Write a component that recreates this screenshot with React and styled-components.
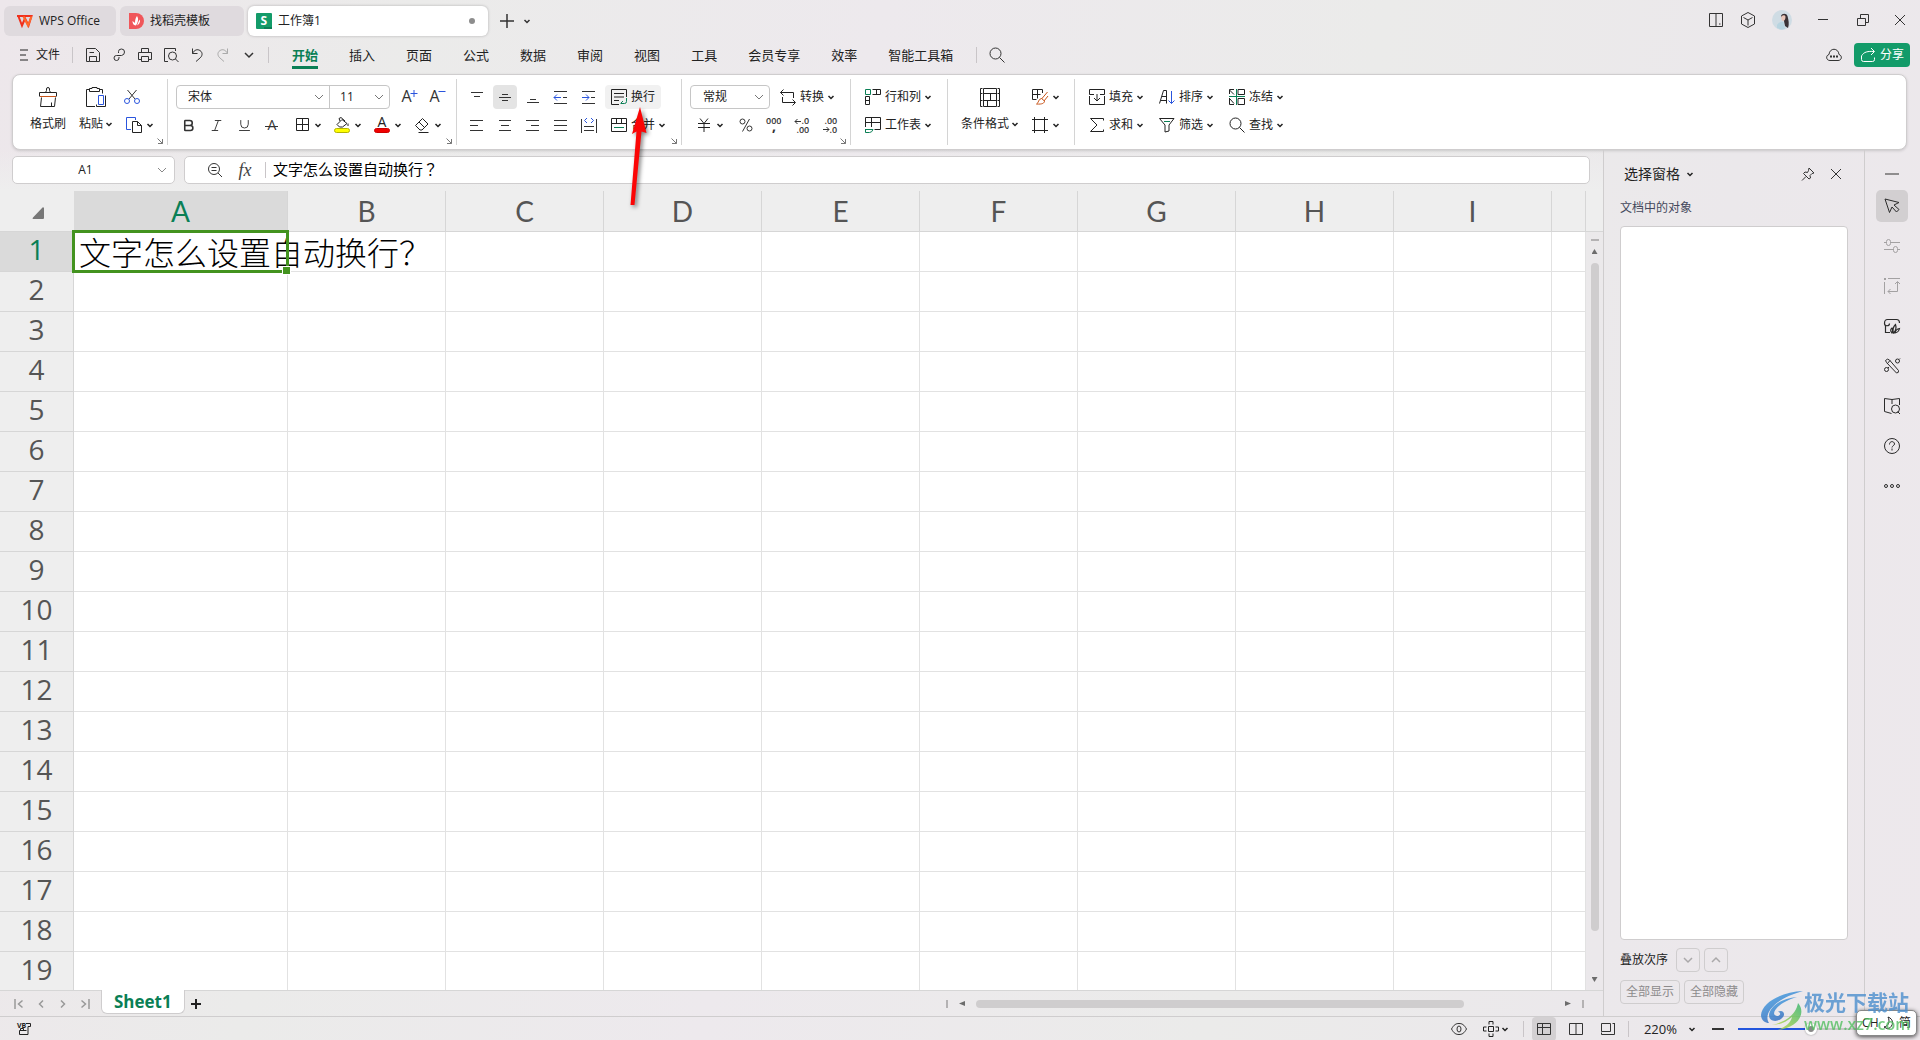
import React, { useState } from "react";
import styled, { createGlobalStyle } from "styled-components";
import { Bold, Italic, Underline } from "lucide-react";

const GlobalStyle = createGlobalStyle`
  * {
    box-sizing: border-box;
  }
  body {
    margin: 0;
    overflow: hidden;
    font-family: "Open Sans", "Noto Sans CJK SC", sans-serif;
    font-size: 12px;
    line-height: 16px;
    color: #222;
  }
  button, input, select {
    font: inherit;
    color: inherit;
    margin: 0;
    padding: 0;
    border: 0;
    background: none;
    outline: none;
  }
`;

const GREEN = "#0a7f55";
const BLUE = "#2a55dd";
const LINE = "#cfcdce";

/* ---------- icons ---------- */

const Svg = styled.svg`
  display: block;
  flex: none;
  fill: none;
  stroke: currentColor;
  overflow: visible;

  text {
    fill: currentColor;
    stroke: none;
    font-family: "Open Sans", sans-serif;
  }
`;

const ICONS = {
  // 20px
  painter: [20, <>
    <path d="M7.5 5.5L8.5 3.5V2a1.5 1.5 0 0 1 3 0v1.5l1 2M1.5 9.5v-4h17v4M3.5 10.5l-1 9h14l1-9M13.5 19.5v-4" />
    <path stroke="#c8551b" d="M2 9.5h16" />
  </>],
  paste: [20, <>
    <path d="M9 19.5H.5v-17h3M13.5 2.5h3v4M3.5 1.5v3h10v-3M6 1.5V.5h5v1M3.5 1.5H6M11 1.5h2.5M19.5 8.5v11h-9v-2" />
    <path stroke={BLUE} d="M12.5 8.5h5v9h-5z" />
  </>],
  cut: [20, <>
    <path d="M5.5 3l7.5 9M14.5 3L7 12" />
    <g stroke={BLUE}><circle cx="5" cy="14" r="2.5" /><circle cx="15" cy="14" r="2.5" /></g>
  </>],
  copy: [20, <>
    <path stroke={BLUE} d="M7 14.5H2.5v-12h9V5" />
    <path d="M8.5 6.5h5l4 4v7h-9zM13.5 6.5v4h4" />
  </>],
  border: [20, <path d="M4.5 3.5h12v12h-12zM10.5 3.5v12M4.5 9.5h12" />],
  bucket: [20, <>
    <path d="M5 9.5L10 4.5l5 4-4.5 3.5H7.5zM8 6l-1-2.5 2-1 4 3.5M16 8.5v2.5" />
    <rect x="2.5" y="13.5" width="15" height="4" rx="2" fill="#ff0" stroke="#b5b500" />
  </>],
  fontColor: [20, <>
    <text x="5.5" y="12" fontSize="14">A</text>
    <rect x="2.5" y="13.5" width="15" height="4" rx="2" fill="#f00000" stroke="#c00" />
  </>],
  eraser: [20, <path d="M3.5 10.5l7-7 5.5 5.5-6 6H8zM7 7l5.5 5.5M6.5 17.5h10" />],
  grow: [20, <>
    <text x="1.5" y="15" fontSize="16">A</text>
    <path stroke={BLUE} d="M10.5 6.5h7M14 3v7" />
  </>],
  shrink: [20, <>
    <text x="1.5" y="15" fontSize="16">A</text>
    <path stroke={BLUE} d="M10.5 4.5h7" />
  </>],
  strike: [20, <>
    <text x="5.5" y="15" fontSize="14">A</text>
    <path d="M3 11.5h13" />
  </>],
  alignTop: [20, <path d="M4 5.5h12M7 9.5h6" />],
  alignMiddle: [20, <path d="M7 7.5h6M4 10.5h12M7 13.5h6" />],
  alignBottom: [20, <path d="M7 12.5h6M4 15.5h12" />],
  outdent: [20, <>
    <path d="M3 4.5h13M12 10.5h4M3 16.5h13" />
    <path stroke={BLUE} d="M3 10.5h7M6 7.5l-3 3 3 3" />
  </>],
  indent: [20, <>
    <path d="M3 4.5h13M12 10.5h4M3 16.5h13" />
    <path stroke={BLUE} d="M3 10.5h7M7 7.5l3 3-3 3" />
  </>],
  alignLeft: [20, <path d="M3 5.5h13M3 10.5h8M3 15.5h13" />],
  alignCenter: [20, <path d="M4 5.5h12M6 10.5h8M4 15.5h12" />],
  alignRight: [20, <path d="M3 5.5h13M8 10.5h8M3 15.5h13" />],
  justify: [20, <path d="M3 5.5h13M3 10.5h13M3 15.5h13" />],
  distribute: [20, <>
    <path d="M2.5 4v14M17.5 4v14M5 11.5h10M5 15.5h10" />
    <path stroke={BLUE} d="M8 3L5.5 5.5 8 8M12 3l2.5 2.5L12 8" />
  </>],
  yuan: [20, <path d="M6 3.5l4 5 4-5M4 8.5h12M4 12.5h12M10 8.5v8.5" />],
  percent: [20, <><circle cx="6.5" cy="6.5" r="2.5" /><circle cx="13.5" cy="13.5" r="2.5" /><path d="M13.5 4l-7 12.5" /></>],
  thousands: [20, <>
    <text x="2" y="9" fontSize="9" fontWeight="600">000</text>
    <text x="8" y="16" fontSize="14" fontWeight="700">,</text>
  </>],
  lessDecimal: [20, <>
    <path d="M3 6.5h6M5.5 4L3 6.5 5.5 9" />
    <text x="9.5" y="9" fontSize="9" fontWeight="600">.0</text>
    <text x="4.5" y="17.5" fontSize="9" fontWeight="600">.00</text>
  </>],
  moreDecimal: [20, <>
    <text x="4.5" y="9" fontSize="9" fontWeight="600">.00</text>
    <path d="M3 14.5h6M6.5 12L9 14.5 6.5 17" />
    <text x="9.5" y="17.5" fontSize="9" fontWeight="600">.0</text>
  </>],
  condition: [20, <>
    <path d="M3.5 1.5h13v18h-13zM3.5 6.5h13M3.5 13.5h13M10.5 7v6M7.5 13.5v6" />
    <path d="M2.5 1.5h-2v18h2M17.5 1.5h2v18h-2M.5 6.5h2M.5 13.5h2M17.5 6.5h2M17.5 13.5h2" />
  </>],
  cellStyle: [20, <>
    <path d="M11 2.5H2.5v10h4M2.5 7.5h8M12.5 6V2.5H8M7.5 2.5v9" />
    <path stroke="#c8551b" d="M17.5 5l-6 7M18 9l-4 5M11.500 11.5l3 2.5c0 2-2 3.5-8 3 2.500-1 1.5-5 5-5.5z" />
  </>],
  crop: [20, <path d="M4.5 2v16M14.5 2v16M2 4.5h16M2 15.5h16" />],
  cursor: [20, <path d="M3 3l4.500 13.500 2.500-5.500 4.500 5 2.500-2.500-5-4.500 5-2.500z" />],
  sliders: [20, <><path d="M2 6.500h2.500M9 6.500h9M2 13.500h9M15.500 13.500H18" /><rect x="4.500" y="3.500" width="4" height="6" rx="2" /><rect x="11.500" y="10.500" width="4" height="6" rx="2" /></>],
  resize: [20, <><path d="M6 2.500h12M2.500 6v12M15.500 6v9.500H6M13 8l2.500-2.500L18 8M8.500 13L6 15.500 8.500 18" /><path fill="currentColor" stroke="none" d="M2 2h2v2H2z" /></>],
  shop: [20, <>
    <path strokeWidth="1.2" d="M2.500 7.500C2.500 4 4 3.500 5.500 3.500h9c1.500 0 3 1 3 3.500M2.500 7.500c0 3 5 3 5 0M3.500 10v6.500H8" />
    <path strokeWidth="1.2" d="M10 17c-2-2-1.500-4 0-5 1 1.500 1 3.500 0 5zM11.500 17c-1-3 0-6.500 2-8.500 1 3 .5 6-2 8.500zM13 17c.5-2.500 2-4 4.500-4.500-.5 2.500-2 4-4.500 4.500z" />
  </>],
  wand: [20, <><path d="M3.500 4.500q2-2.500 4-.5l9 10.500q.5 2.500-2 2.500L4.500 6.500zM5 8l3-3.500" /><circle cx="15.500" cy="5" r="2" /><circle cx="4.500" cy="13.500" r="2" /><path d="M17 3.500l1-1M6 12l1-1" /></>],
  book: [20, <><path d="M10 3.500L2.500 2.500v13l7 2M10 3.500l7.500-1V9M10 3.500V8" /><circle cx="13.500" cy="13" r="4" /><path d="M15.500 15.500l2.500 2.500" /></>],
  help: [20, <><circle cx="10" cy="10" r="7.500" /><path d="M7.500 8.500c0-4 5-3.500 5-.5 0 1.500-2.500 2-2.500 3.500M10 12.500v2" /></>],
  more: [20, <><circle cx="4" cy="10" r="1.500" /><circle cx="10" cy="10" r="1.500" /><circle cx="16" cy="10" r="1.500" /></>],
  // 16px
  wrap: [16, <>
    <path d="M8 15.500H.5V.5h15V8M3 4.500h10M3 8h10M3 11.500h5" />
    <path stroke={GREEN} d="M15.500 9v3.500q0 2-2 2H10M12 12l-2.500 2.500" />
  </>],
  merge: [16, <>
    <path d="M.5 1.500h15v13H.5zM.5 6.500h15M5.500 1.500v5M10.500 1.500v5" />
    <path stroke={GREEN} d="M3 10.500h10" />
  </>],
  convert: [16, <path d="M3.500.5l-3 3 3 3M.5 3.500h13V9M2.500 8v5.500H15M12.500 10.500l3 3-3 3" />],
  rowCol: [16, <>
    <path d="M7.500 .5h8v5h-8M11.500.5v5M.5 7.500v8h4v-8zM.5 11.500h4" />
    <path stroke={GREEN} d="M.5.5h5v5h-5z" />
  </>],
  sheet: [16, <>
    <path d="M.5 10V.5h15v12h-6M.5 5.500h15M6.500.5V10" />
    <path stroke={GREEN} d="M.5 12v3.500h4q2.500 0 3.500-3H.5" />
  </>],
  fill: [16, <path d="M5 5.500H.5V.5h15v5H11M.5 7v8.500h15V7M8 5v7M5 9l3 3 3-3" />],
  sum: [16, <path d="M14.500 3.500V1.500h-13l6.500 6.500-6.500 6.500h13v-2" />],
  sort: [16, <>
    <path d="M7.500 14.500v-13h-3l-4 13M3 7.500h4.500M2 11.500h5.500" />
    <path stroke={BLUE} d="M12.500 2v12.500M9.500 11.500l3 3 3-3" />
  </>],
  filter: [16, <>
    <path d="M.5 1.500h14.500l-5 6.500v6l-4 1V8z" />
    <path stroke={GREEN} d="M5 4.500h6" />
  </>],
  freeze: [16, <>
    <path d="M5 .5H.5V5M.5 1l4.500 4.500M9 .5h6.500v5H9zM.5 9v6.500H5M1 10l4 4.500M9 9.500h6.500v6H9z" />
    <path stroke={GREEN} d="M0 7.500h16M7.500 0v16" />
  </>],
  search: [16, <><circle cx="6.500" cy="6.500" r="5.500" /><path d="M10.500 10.500l5 5" /></>],
  menu: [16, <path d="M4 3h8M4 8h6M4 13h8" />],
  save: [16, <path d="M4.500 14.500h-3v-13h9l4 4v9zM4.500 14.500v-5h7v5M4.500 5.500H9" />],
  link: [16, <path d="M7.500 6V4.500q0-2.500 3-2.500t3 3-3 3.500H5.500a2.500 2.500 0 1 0 2.500 2.500V10" />],
  print: [16, <path d="M4.500 5.500v-4h7v4M4.500 12.500h-3v-7h13v7h-3M4.500 9.500h7v5h-7z" />],
  preview: [16, <><path d="M5 14.500H1.500v-13h11V4" /><circle cx="9.500" cy="9" r="4" /><path d="M12.500 12l3 3" /></>],
  undo: [16, <path d="M3.500 1.500v5h5M3.500 6.500c2-4 5-4.500 7.500-3 3 2 2.500 5.500 0 7.500l-4 3.500" />],
  redo: [16, <path d="M12.500 1.500v5h-5M12.500 6.500c-2-4-5-4.500-7.500-3-3 2-2.500 5.500 0 7.500l4 3.500" />],
  down: [16, <path strokeWidth="1.500" d="M4 6l4 4 4-4" />],
  up: [16, <path strokeWidth="1.500" d="M4 10l4-4 4 4" />],
  thinDown: [10, <path d="M1 3l4 4 4-4" />],
  caret: [6, <path strokeWidth="1.500" d="M.5 2L3 4.500 5.500 2" />],
  corner: [6, <path stroke="#777" d="M.5.5l5 5M5.500 1v4.500H1" />],
  plus: [16, <path strokeWidth="1.500" d="M1 8h14M8 1v14" />],
  split: [16, <path d="M8 14.500H1.500v-13h13V14.500H8zM8 1.500v13M11 12h1.500" />],
  cube: [16, <path d="M8 .5l6.500 3.500v8L8 15.500 1.500 12V4zM3.500 5.500L8 8l4.500-2.500M8 8v5.500" />],
  minimize: [12, <path d="M1 5.500h10" />],
  restore: [12, <path d="M.5 4.500h8v7h-8zM3.500 4.500v-4h8v8h-3" />],
  close: [12, <path d="M1 1l10 10M11 1L1 11" />],
  cloud: [16, <>
    <path d="M4 13.500c-4 0-4.500-5-1-6 .5-7 9.500-7 10 0 3.500 1 3 6-1 6z" />
    <path strokeWidth="2" strokeDasharray="2 1" d="M4 9.500h8" />
  </>],
  share: [16, <path d="M1.500 8.500v4q0 2 2 2h9q2 0 2-2v-2M2 8.500C3.500 5 8 4 14 4.500M11 1l3.500 3.500L11 8" />],
  pin: [14, <path d="M8 1l5 5-2 .5-2 2 .5 2.500-1.500 1L2.500 6.500 4 5l2.500.5 1-2zM5 9.500L1 13.500" />],
  zoomOut: [16, <><circle cx="7" cy="7" r="5.500" /><path d="M11 11l4 4M4.500 5.500h5M4.500 8.500h5" /></>],
  eye: [16, <><path d="M.5 8C3 3.500 5 2.500 8 2.500S13 3.500 15.500 8C13 12.500 11 13.500 8 13.500S3 12.500.5 8z" /><ellipse cx="8" cy="8" rx="2" ry="3" /></>],
  target: [16, <path d="M5.500 5.500h5v5h-5zM6 3.500v-3h4v3M6 12.500v3h4v-3M3.500 6h-3v4h3M12.500 6h3v4h-3" />],
  normalView: [16, <path d="M1.500 2.500h13v11h-13zM1.500 6.500h13M6.500 2.500v11" />],
  pageView: [16, <path d="M1.500 2.500h13v11h-13zM8 2.500v11" />],
  readView: [16, <path d="M1.500 2.500h9v8h-9zM14.500 2v11.500h-13v-2M12.500 2.500h2" />],
  macro: [16, <>
    <text x="1" y="7" fontSize="7" fontWeight="700">VB</text>
    <path d="M10 2.500h4.500v3h-2.500v8H3.500v-4h7M7.500 9.500v-2h-3v2" />
  </>],
  first: [12, <path strokeWidth="1.500" d="M2 1v10M9.500 2.500L5.500 6l4 3.500" />],
  prev: [12, <path strokeWidth="1.500" d="M8 2.500L4.500 6 8 9.500" />],
  next: [12, <path strokeWidth="1.500" d="M4 2.500L7.500 6 4 9.500" />],
  last: [12, <path strokeWidth="1.500" d="M10 1v10M2.500 2.500l4 3.500-4 3.500" />],
};

const Icon = ({ name }) => {
  const [size, body] = ICONS[name];
  return (
    <Svg width={size} height={size} viewBox={`0 0 ${size} ${size}`} aria-hidden="true">
      {body}
    </Svg>
  );
};

/* ---------- shell ---------- */

const Page = styled.div`
  height: 100vh;
  display: flex;
  flex-direction: column;
  background: linear-gradient(100deg, #ede7eb 0%, #ebebea 20%, #ede9ed 42%, #ebebea 66%, #ebe8eb 84%, #ede8ec 100%);
`;

const TitleBar = styled.header`
  display: flex;
  gap: 4px;
  height: 36px;
  padding: 6px 0 0 4px;
`;

const DocTab = styled.button`
  display: flex;
  align-items: center;
  gap: 6px;
  width: ${({ $width }) => $width}px;
  height: 30px;
  padding: 0 ${({ $pad }) => $pad || 8}px;
  border-radius: 6px;
  text-align: left;
  background: ${({ $active }) => ($active ? "#fff" : "#dfdade")};
  box-shadow: ${({ $active }) => ($active ? "0 0 3px rgba(0, 0, 0, 0.25)" : "none")};
`;

const Unsaved = styled.i`
  width: 6px;
  height: 6px;
  margin: 0 5px 0 auto;
  border-radius: 3px;
  background: #8d8d8d;
`;

const PlainButton = styled.button`
  display: flex;
  align-items: center;
  justify-content: center;
  width: ${({ $width }) => $width || 24}px;
  height: 24px;
  flex: none;
  border-radius: 4px;
  color: ${({ $color }) => $color || "#333"};
  background: ${({ $active }) => ($active ? "#e4e4e4" : "none")};
`;

const ViewButton = styled(PlainButton)`
  background: ${({ $active }) => ($active ? "#d3d0d2" : "none")};
`;

const NewTab = styled.div`
  display: flex;
  align-items: center;
  padding-left: 3px;
`;

const WindowControls = styled.div`
  display: flex;
  align-items: center;
  height: 28px;
  margin-left: auto;
`;

const MenuBar = styled.nav`
  display: flex;
  align-items: center;
  height: 38px;
  padding: 0 10px 0 12px;
`;

const FileButton = styled.button`
  display: flex;
  align-items: center;
  gap: 4px;
  padding: 0 12px 0 4px;
`;

const MenuDivider = styled.i`
  width: 1px;
  height: 16px;
  margin: ${({ $margin }) => $margin || "0"};
  background: #c9c5c8;
`;

const QuickTools = styled.div`
  display: flex;
  gap: 2px;
  padding: 0 7px 0 8px;
`;

const MenuTabs = styled.div`
  display: flex;
  gap: 31px;
  padding: 0 23px;
`;

const MenuTab = styled.button`
  height: 28px;
  font-size: 13px;
  line-height: 22px;
  padding-top: 3px;
  white-space: nowrap;
  border-bottom: 3px solid ${({ $active }) => ($active ? GREEN : "transparent")};
  font-weight: ${({ $active }) => ($active ? 700 : 400)};
  color: ${({ $active }) => ($active ? GREEN : "#222")};
`;

const MenuRight = styled.div`
  display: flex;
  align-items: center;
  gap: 8px;
  margin-left: auto;
`;

const ShareButton = styled.button`
  display: flex;
  align-items: center;
  gap: 4px;
  height: 24px;
  padding: 0 6px;
  border-radius: 4px;
  background: #139b69;
  color: #fff;
`;

/* ---------- ribbon ---------- */

const Ribbon = styled.section`
  display: flex;
  height: 76px;
  margin: 0 13px 0 12px;
  padding: 0 4px;
  background: #fff;
  border: 1px solid ${LINE};
  border-radius: 8px;
  box-shadow: 0 1px 3px rgba(0, 0, 0, 0.15);
`;

const Group = styled.div`
  position: relative;
  display: flex;
  gap: 3px;
  margin: 4px 0;
  padding: 4px ${({ $end }) => $end || 10}px 0 8px;
  border-right: ${({ $last }) => ($last ? "0" : "1px solid #d4d4d4")};
`;

const Launcher = styled.button`
  position: absolute;
  right: 4px;
  bottom: 1px;
`;

const Rows = styled.div`
  display: flex;
  flex-direction: column;
`;

const Row = styled.div`
  display: flex;
  align-items: center;
  gap: ${({ $gap }) => $gap || 4}px;
  height: 28px;
`;

const LabelButton = styled.button`
  display: flex;
  align-items: center;
  gap: 4px;
  height: 24px;
  padding: 0 6px;
  border-radius: 4px;
  white-space: nowrap;
  background: ${({ $active }) => ($active ? "#f1f1f1" : "none")};
`;

const SplitButton = styled.button`
  display: flex;
  align-items: center;
  gap: 3px;
  height: 24px;
  padding: 0 3px 0 4px;
`;

const BigButton = styled.button`
  display: flex;
  flex-direction: column;
  align-items: center;
  padding: 4px 5px 0;
  gap: 9px;
  white-space: nowrap;

  span {
    display: flex;
    align-items: center;
    gap: 3px;
  }
`;

const Pickers = styled.div`
  display: flex;
  height: 24px;
  margin-right: ${({ $after }) => $after || 0}px;
  border: 1px solid #c6c6c6;
  border-radius: 4px;
`;

const Picker = styled.label`
  position: relative;
  display: flex;
  align-items: center;
  width: ${({ $width }) => $width}px;
  border-left: ${({ $divided }) => ($divided ? "1px solid #c6c6c6" : "0")};
  color: #777;

  select {
    appearance: none;
    width: 100%;
    height: 22px;
    padding-left: ${({ $pad }) => $pad || 11}px;
    color: #222;
  }
  svg {
    position: absolute;
    right: 5px;
    pointer-events: none;
  }
`;

const WrapTarget = styled.div`
  position: relative;
`;

const Pointer = styled.svg`
  position: absolute;
  z-index: 5;
  top: 22px;
  left: 22px;
  pointer-events: none;
  filter: drop-shadow(2px 2px 2px rgba(0, 0, 0, 0.5));
`;

/* ---------- work area ---------- */

const Body = styled.main`
  display: flex;
  flex: 1;
  min-height: 0;
`;

const Work = styled.div`
  display: flex;
  flex-direction: column;
  flex: 1;
  min-width: 0;
`;

const FormulaRow = styled.div`
  display: flex;
  gap: 9px;
  padding: 6px 13px 7px 12px;
  background: linear-gradient(rgba(238, 238, 238, 0), #eee);
`;

const FormulaBox = styled.div`
  display: flex;
  align-items: center;
  height: 28px;
  border: 1px solid ${LINE};
  border-radius: 5px;
  background: #fff;
`;

const NameBox = styled(FormulaBox)`
  width: 163px;

  input {
    flex: 1;
    min-width: 0;
    padding-left: 8px;
    text-align: center;
  }
`;

const FormulaInput = styled(FormulaBox)`
  flex: 1;
  gap: 6px;
  padding-left: 18px;
  color: #444;

  input {
    flex: 1;
    height: 26px;
    padding-bottom: 4px;
    font-family: "Open Sans", "Noto Sans CJK JP", sans-serif;
    font-size: 15px;
    color: #000;
  }
`;

const Fx = styled.button`
  width: 24px;
  font: italic 18px/24px "Liberation Serif", serif;
`;

const SheetArea = styled.div`
  display: flex;
  flex: 1;
  min-height: 0;
`;

const SheetClip = styled.div`
  flex: 1;
  min-width: 0;
  overflow: hidden;
`;

const SheetTable = styled.table`
  width: 100%;
  table-layout: fixed;
  border-collapse: separate;
  border-spacing: 0;
  background: #fff;

  th, td {
    height: 40px;
    padding: 0;
    border-right: 1px solid #e2e2e2;
    border-bottom: 1px solid #e2e2e2;
  }
  thead th {
    height: 41px;
  }
`;

const HeadCell = styled.th`
  font-family: "Lato", sans-serif;
  font-size: 28px;
  line-height: 32px;
  font-weight: 400;
  color: ${({ $active }) => ($active ? GREEN : "#555")};
  background: ${({ $active }) => ($active ? "#dadada" : "#eee")};

  && {
    border-color: #d6d6d6;
  }
`;

const RowHead = styled(HeadCell)`
  font-family: "Open Sans", sans-serif;

  && {
    padding-bottom: 6px;
  }
`;

const Corner = styled(HeadCell)`
  svg {
    margin: 4px 0 0 32px;
  }
  && {
    border-right-color: #eee;
  }
`;

const ActiveCell = styled.td`
  position: relative;
  z-index: 1;
  font-family: "Noto Sans CJK SC", sans-serif;
  font-size: 32px;
  line-height: 36px;
  font-weight: 300;
  color: #000;
  white-space: nowrap;

  && {
    padding: 0 0 2px 5px;
  }
`;

const Selection = styled.i`
  position: absolute;
  inset: -2px;
  border: 3px solid #43931f;

  &::after {
    content: "";
    position: absolute;
    right: -5px;
    bottom: -5px;
    width: 7px;
    height: 7px;
    border: 1px solid #fff;
    background: #43931f;
  }
`;

const VScroll = styled.div`
  display: flex;
  flex-direction: column;
  align-items: center;
  width: 17px;
  padding-bottom: 8px;
`;

const VScrollHead = styled.div`
  width: 17px;
  height: 41px;
  margin-bottom: 7px;
  background: #eee;
  border-bottom: 1px solid #d6d6d6;
`;

const Grip = styled.i`
  width: ${({ $vertical }) => ($vertical ? 2 : 8)}px;
  height: ${({ $vertical }) => ($vertical ? 8 : 2)}px;
  margin-bottom: ${({ $vertical }) => ($vertical ? 0 : 8)}px;
  background: #b4b2b3;
`;

const VThumb = styled.div`
  flex: 1;
  width: 8px;
  margin: 9px 0 46px;
  border-radius: 4px;
  background: #cfcdce;
`;

const HThumb = styled.div`
  flex: 0 1 488px;
  height: 8px;
  margin-right: auto;
  border-radius: 4px;
  background: #cfcdce;
`;

const Arrow = styled.button`
  width: 6px;
  height: 5px;
  background: #6c6c6c;
  clip-path: polygon(${({ $points }) => $points});
`;

const SheetBar = styled.div`
  display: flex;
  height: 26px;
  border-top: 1px solid #d6d6d6;
`;

const SheetNav = styled.div`
  display: flex;
  align-items: center;
  gap: 10px;
  width: 101px;
  padding-left: 13px;
  color: #999;
`;

const SheetTab = styled.button`
  height: 24px;
  margin-top: -1px;
  padding: 0 12px;
  border: 1px solid ${LINE};
  border-top: 0;
  border-radius: 0 0 6px 6px;
  background: #fff;
  font-size: 17px;
  line-height: 22px;
  font-weight: 700;
  color: ${GREEN};
`;

const AddSheet = styled.button`
  width: 22px;
  display: flex;
  align-items: center;
  justify-content: center;
`;

const HScroll = styled.div`
  display: flex;
  align-items: center;
  gap: 11px;
  width: 657px;
  margin-left: auto;
  padding-right: 19px;
`;

/* ---------- right panel ---------- */

const Panel = styled.aside`
  display: flex;
  flex-direction: column;
  width: 261px;
  padding: 12px 16px 12px 16px;
  border-left: 1px solid ${LINE};
`;

const PanelHead = styled.div`
  display: flex;
  align-items: center;
  height: 24px;
  gap: 4px;
  font-size: 14px;

  button:first-child {
    display: flex;
    align-items: center;
    gap: 7px;
    margin-right: auto;
    padding-left: 4px;
  }
`;

const PanelLabel = styled.h2`
  margin: 14px 0 10px;
  font-size: 12px;
  line-height: 16px;
  font-weight: 400;
  color: #44485c;
`;

const ObjectList = styled.div`
  flex: 1;
  border: 1px solid ${LINE};
  border-radius: 4px;
  background: #fff;
`;

const PanelRow = styled.div`
  display: flex;
  align-items: center;
  gap: 4px;
  margin-top: 8px;

  span {
    margin-right: 4px;
  }
`;

const PanelButton = styled.button`
  display: flex;
  align-items: center;
  justify-content: center;
  min-width: 24px;
  height: 24px;
  padding: 0 ${({ $text }) => ($text ? 5 : 3)}px;
  border: 1px solid ${LINE};
  border-radius: 4px;
  color: ${({ $text }) => ($text ? "#8d8b8c" : "#aaa8a9")};
`;

const SideBar = styled.aside`
  display: flex;
  flex-direction: column;
  align-items: center;
  gap: 8px;
  width: 56px;
  padding: 23px 1px 0 0;
  border-left: 1px solid ${LINE};

  > i {
    width: 14px;
    height: 2px;
    margin-bottom: 7px;
    background: #8f8d8e;
  }
`;

const SideButton = styled.button`
  display: flex;
  align-items: center;
  justify-content: center;
  width: 32px;
  height: 32px;
  border-radius: 5px;
  color: ${({ disabled }) => (disabled ? "#a3a1a2" : "#2b2b2b")};
  background: ${({ $active }) => ($active ? "#d2cfd1" : "none")};
`;

/* ---------- status bar ---------- */

const StatusBar = styled.footer`
  position: relative;
  display: flex;
  align-items: center;
  height: 24px;
  padding: 0 36px 0 16px;
  border-top: 1px solid ${LINE};
`;

const StatusTools = styled.div`
  display: flex;
  align-items: center;
  margin-left: auto;
  gap: 8px;
`;

const ZoomButton = styled.button`
  display: flex;
  align-items: center;
  gap: 12px;
  padding: 0 17px 0 7px;
  font-size: 13px;
`;

const ZoomMinus = styled.button`
  width: 12px;
  height: 2px;
  background: #333;
`;

const ZoomSlider = styled.input`
  appearance: none;
  width: 146px;
  height: 12px;
  margin-left: 14px;
  background: linear-gradient(90deg, #2355dd 50%, #c8c5c7 50%) center / 100% 2px no-repeat;

  &::-webkit-slider-thumb {
    appearance: none;
    width: 12px;
    height: 12px;
    border-radius: 6px;
    border: 3px solid #fff;
    background: #888;
    box-shadow: 0 0 2px rgba(0, 0, 0, 0.4);
  }
`;

const ImeBox = styled.div`
  position: absolute;
  right: 3px;
  bottom: 4px;
  display: flex;
  align-items: center;
  justify-content: space-around;
  width: 61px;
  height: 26px;
  padding: 0 3px;
  border: 1px solid #888;
  border-radius: 5px;
  background: #fff;
  box-shadow: 0 1px 4px rgba(0, 0, 0, 0.7);
`;

const Watermark = styled.div`
  position: absolute;
  right: 10px;
  bottom: 8px;
  display: flex;
  align-items: flex-end;
  opacity: 0.8;
  pointer-events: none;

  strong, small {
    display: block;
    width: 106px;
    white-space: nowrap;
  }
  strong {
    font-size: 21px;
    line-height: 27px;
    font-weight: 700;
    color: #4c8fce;
  }
  small {
    font-size: 16px;
    line-height: 16px;
    font-weight: 600;
    color: #55bf62;
  }
`;

/* ---------- data ---------- */

const QUICK = ["save", "link", "print", "preview", "undo", "redo", "down"];
const MENUS = ["开始", "插入", "页面", "公式", "数据", "审阅", "视图", "工具", "会员专享", "效率", "智能工具箱"];
const COLUMNS = ["A", "B", "C", "D", "E", "F", "G", "H", "I"];
const ROWS = Array.from({ length: 19 }, (_, i) => i + 1);
const SIDE = ["cursor", "sliders", "resize", "shop", "wand", "book", "help", "more"];
const CELL_TEXT = "文字怎么设置自动换行？";

const Drop = ({ icon, label }) => (
  <LabelButton>
    <Icon name={icon} />
    {label}
    <Icon name="caret" />
  </LabelButton>
);

const Split = ({ icon, label }) => (
  <SplitButton aria-label={label}>
    <Icon name={icon} />
    <Icon name="caret" />
  </SplitButton>
);

const Tools = ({ names, active }) =>
  names.map((name) => (
    <PlainButton key={name} aria-label={name} $active={name === active}>
      <Icon name={name} />
    </PlainButton>
  ));

const Corners = () => (
  <Launcher aria-label="更多设置">
    <Icon name="corner" />
  </Launcher>
);

const Avatar = () => (
  <Svg width="20" height="20" viewBox="0 0 20 20" aria-hidden="true">
    <g stroke="none">
      <circle cx="10" cy="10" r="10" fill="#cfdce4" />
      <path fill="#3a3236" d="M9 6c1-3 5.500-3 6.500 0 1 4 2 8 .5 12l-3-2-1-5z" />
      <path fill="#e9c5b8" d="M9.500 6.500c1.500-2 4-1.500 4 .5s-1 4-2.500 4-2-2.500-1.500-4.500z" />
      <path fill="#b8d4e0" d="M5 15c1-2 4-4 6.500-3l1.500 7c-3 1-6 0-8-1z" />
    </g>
  </Svg>
);

const Title = () => (
  <TitleBar>
    <DocTab $width={112} $pad={13}>
      <Svg width="16" height="12" viewBox="0 0 16 12" aria-hidden="true">
        <path stroke="#f0301d" strokeWidth="2" d="M0 1h14.500L11.500 10.500 8 3.500 5 10.500 1.500 1.500" />
        <path stroke="#ff6a2b" strokeWidth="2" d="M6.500 1.500l4.500 9 3.500-9" />
      </Svg>
      WPS Office
    </DocTab>
    <DocTab $width={124}>
      <Svg width="16" height="16" viewBox="0 0 16 16" aria-hidden="true">
        <path fill="#f0565a" stroke="none" d="M1 0h7a8 8 0 0 1 0 16H1z" />
        <path fill="#fff" stroke="none" d="M9 3c2 3 1 6-1 9.500C5 12.500 4.500 9.500 4.500 8L7 10c0-3 .5-5 2-7zM12 6.500c.5 3-1 5-3 6 1-2 1.500-4.500 3-6z" />
      </Svg>
      找稻壳模板
    </DocTab>
    <DocTab $width={240} $active>
      <Svg width="16" height="16" viewBox="0 0 16 16" aria-hidden="true">
        <rect width="16" height="16" rx="1" fill="#139b69" stroke="none" />
        <path fill="#0a7f55" stroke="none" d="M8 16v-2h8v2z" />
        <text x="4.500" y="12" fontSize="12" fontWeight="700" style={{ fill: "#fff" }}>S</text>
      </Svg>
      工作簿1
      <Unsaved />
    </DocTab>
    <NewTab>
      <PlainButton aria-label="新建"><Icon name="plus" /></PlainButton>
      <PlainButton $width={16} aria-label="标签列表"><Icon name="caret" /></PlainButton>
    </NewTab>
    <WindowControls>
      <PlainButton $width={32} aria-label="分屏"><Icon name="split" /></PlainButton>
      <PlainButton $width={32} aria-label="应用"><Icon name="cube" /></PlainButton>
      <PlainButton $width={36} aria-label="账号"><Avatar /></PlainButton>
      <PlainButton $width={46} aria-label="最小化"><Icon name="minimize" /></PlainButton>
      <PlainButton $width={34} aria-label="还原"><Icon name="restore" /></PlainButton>
      <PlainButton $width={40} aria-label="关闭"><Icon name="close" /></PlainButton>
    </WindowControls>
  </TitleBar>
);

const Menu = () => (
  <MenuBar>
    <FileButton><Icon name="menu" />文件</FileButton>
    <MenuDivider />
    <QuickTools>
      {QUICK.map((name) => (
        <PlainButton key={name} aria-label={name} $color={name === "redo" ? "#aaa" : "#333"}>
          <Icon name={name} />
        </PlainButton>
      ))}
    </QuickTools>
    <MenuDivider />
    <MenuTabs>
      {MENUS.map((menu, i) => (
        <MenuTab key={menu} $active={i === 0}>{menu}</MenuTab>
      ))}
    </MenuTabs>
    <MenuDivider $margin="0 8px 0 0" />
    <PlainButton aria-label="搜索"><Icon name="search" /></PlainButton>
    <MenuRight>
      <PlainButton aria-label="云同步"><Icon name="cloud" /></PlainButton>
      <ShareButton><Icon name="share" />分享</ShareButton>
    </MenuRight>
  </MenuBar>
);

const Toolbar = () => (
  <Ribbon>
    <Group $end={11}>
      <BigButton><Icon name="painter" /><span>格式刷</span></BigButton>
      <BigButton><Icon name="paste" /><span>粘贴<Icon name="caret" /></span></BigButton>
      <Rows>
        <Row><PlainButton aria-label="剪切"><Icon name="cut" /></PlainButton></Row>
        <Row><Split icon="copy" label="复制" /></Row>
      </Rows>
      <Corners />
    </Group>
    <Group $end={6}>
      <Rows>
        <Row>
          <Pickers $after={4}>
            <Picker $width={152}>
              <select aria-label="字体"><option>宋体</option></select>
              <Icon name="thinDown" />
            </Picker>
            <Picker $width={60} $divided $pad={10}>
              <select aria-label="字号"><option>11</option></select>
              <Icon name="thinDown" />
            </Picker>
          </Pickers>
          <Tools names={["grow", "shrink"]} />
        </Row>
        <Row>
          <PlainButton aria-label="加粗"><Bold size={15} strokeWidth={2.5} /></PlainButton>
          <PlainButton aria-label="倾斜"><Italic size={15} strokeWidth={1.5} /></PlainButton>
          <PlainButton aria-label="下划线"><Underline size={15} strokeWidth={1.5} /></PlainButton>
          <Tools names={["strike"]} />
          <Split icon="border" label="边框" />
          <Split icon="bucket" label="填充颜色" />
          <Split icon="fontColor" label="字体颜色" />
          <Split icon="eraser" label="清除" />
        </Row>
      </Rows>
      <Corners />
    </Group>
    <Group>
      <Rows>
        <Row>
          <Tools names={["alignTop", "alignMiddle", "alignBottom", "outdent", "indent"]} active="alignMiddle" />
          <WrapTarget>
            <LabelButton $active><Icon name="wrap" />换行</LabelButton>
            <Pointer width="22" height="100" viewBox="0 0 22 100">
              <path fill="#fb0505" d="M13 0l6.500 26-5-1.500L7.500 98H3.500L9.500 24.500 5 27z" />
            </Pointer>
          </WrapTarget>
        </Row>
        <Row>
          <Tools names={["alignLeft", "alignCenter", "alignRight", "justify", "distribute"]} />
          <Drop icon="merge" label="合并" />
        </Row>
      </Rows>
      <Corners />
    </Group>
    <Group $end={8}>
      <Rows>
        <Row>
          <Pickers>
            <Picker $width={78} $pad={12}>
              <select aria-label="数字格式"><option>常规</option></select>
              <Icon name="thinDown" />
            </Picker>
          </Pickers>
          <Drop icon="convert" label="转换" />
        </Row>
        <Row $gap={8}>
          <Split icon="yuan" label="货币" />
          <Row>
            <Tools names={["percent", "thousands", "lessDecimal", "moreDecimal"]} />
          </Row>
        </Row>
      </Rows>
      <Corners />
    </Group>
    <Group>
      <Rows>
        <Row><Drop icon="rowCol" label="行和列" /></Row>
        <Row><Drop icon="sheet" label="工作表" /></Row>
      </Rows>
    </Group>
    <Group $end={12}>
      <BigButton><Icon name="condition" /><span>条件格式<Icon name="caret" /></span></BigButton>
      <Rows>
        <Row><Split icon="cellStyle" label="单元格样式" /></Row>
        <Row><Split icon="crop" label="表格样式" /></Row>
      </Rows>
    </Group>
    <Group $last>
      <Rows>
        <Row>
          <Drop icon="fill" label="填充" />
          <Drop icon="sort" label="排序" />
          <Drop icon="freeze" label="冻结" />
        </Row>
        <Row>
          <Drop icon="sum" label="求和" />
          <Drop icon="filter" label="筛选" />
          <Drop icon="search" label="查找" />
        </Row>
      </Rows>
    </Group>
  </Ribbon>
);

const Sheet = () => (
  <SheetArea>
    <SheetClip>
      <SheetTable>
        <colgroup>
          <col width="74" />
          {COLUMNS.map((col) => (
            <col key={col} width={col === "A" ? "214" : "158"} />
          ))}
          <col />
        </colgroup>
        <thead>
          <tr>
            <Corner scope="row">
              <Svg width="12" height="12" viewBox="0 0 12 12" aria-label="全选">
                <path fill="#777" stroke="none" d="M12 1v10a1 1 0 0 1-1 1H1q-1-.5 0-1.500L10.500.5q1-.5 1.500.5z" />
              </Svg>
            </Corner>
            {COLUMNS.map((col) => (
              <HeadCell key={col} scope="col" $active={col === "A"}>{col}</HeadCell>
            ))}
            <HeadCell scope="col" />
          </tr>
        </thead>
        <tbody>
          {ROWS.map((row) => (
            <tr key={row}>
              <RowHead scope="row" $active={row === 1}>{row}</RowHead>
              {COLUMNS.map((col) =>
                row === 1 && col === "A" ? (
                  <ActiveCell key={col}>{CELL_TEXT}<Selection /></ActiveCell>
                ) : (
                  <td key={col} />
                )
              )}
              <td />
            </tr>
          ))}
        </tbody>
      </SheetTable>
    </SheetClip>
    <VScroll>
      <VScrollHead />
      <Grip />
      <Arrow aria-label="向上" $points="50% 0, 100% 100%, 0 100%" />
      <VThumb />
      <Arrow aria-label="向下" $points="0 0, 100% 0, 50% 100%" />
    </VScroll>
  </SheetArea>
);

const SheetFooter = () => (
  <SheetBar>
    <SheetNav>
      {["first", "prev", "next", "last"].map((name) => (
        <button key={name} aria-label={name}><Icon name={name} /></button>
      ))}
    </SheetNav>
    <SheetTab>Sheet1</SheetTab>
    <AddSheet aria-label="新建工作表">
      <Svg width="10" height="10" viewBox="0 0 10 10"><path strokeWidth="2" d="M0 5h10M5 0v10" /></Svg>
    </AddSheet>
    <HScroll>
      <Grip $vertical />
      <Arrow aria-label="向左" $points="0 50%, 100% 0, 100% 100%" />
      <HThumb />
      <Arrow aria-label="向右" $points="0 0, 100% 50%, 0 100%" />
      <Grip $vertical />
    </HScroll>
  </SheetBar>
);

const SelectionPanel = () => (
  <Panel>
    <PanelHead>
      <button>选择窗格<Icon name="caret" /></button>
      <PlainButton aria-label="固定"><Icon name="pin" /></PlainButton>
      <PlainButton aria-label="关闭窗格"><Icon name="close" /></PlainButton>
    </PanelHead>
    <PanelLabel>文档中的对象</PanelLabel>
    <ObjectList />
    <PanelRow>
      <span>叠放次序</span>
      <PanelButton aria-label="下移"><Icon name="down" /></PanelButton>
      <PanelButton aria-label="上移"><Icon name="up" /></PanelButton>
    </PanelRow>
    <PanelRow>
      <PanelButton $text>全部显示</PanelButton>
      <PanelButton $text>全部隐藏</PanelButton>
    </PanelRow>
  </Panel>
);

const Status = ({ zoom, onZoom }) => (
  <StatusBar>
    <Icon name="macro" />
    <StatusTools>
      <PlainButton aria-label="护眼模式"><Icon name="eye" /></PlainButton>
      <Split icon="target" label="阅读模式" />
      <MenuDivider $margin="0 0 0 4px" />
      <ViewButton aria-label="普通视图" $active><Icon name="normalView" /></ViewButton>
      <ViewButton aria-label="分页预览"><Icon name="pageView" /></ViewButton>
      <ViewButton aria-label="阅读视图"><Icon name="readView" /></ViewButton>
      <MenuDivider />
      <ZoomButton>{zoom}%<Icon name="caret" /></ZoomButton>
    </StatusTools>
    <ZoomMinus aria-label="缩小" />
    <ZoomSlider
      type="range"
      aria-label="缩放"
      min={40}
      max={400}
      value={zoom}
      onChange={(e) => onZoom(Number(e.target.value))}
    />
    <ImeBox>
      <span>CH</span>
      <Svg width="12" height="14" viewBox="0 0 12 14" aria-hidden="true">
        <path d="M5 1c6 2 6 9 0 12l-4-2c5-1 6-6 4-10z" />
      </Svg>
      <span>简</span>
    </ImeBox>
    <Watermark>
      <Svg width="44" height="42" viewBox="0 0 44 42" aria-hidden="true">
        <defs>
          <linearGradient id="swirl" x1="0" y1="0" x2="0.6" y2="1">
            <stop offset="0" stopColor="#3fa6ea" />
            <stop offset="1" stopColor="#2c63b8" />
          </linearGradient>
          <linearGradient id="leaf" x1="1" y1="0" x2="0" y2="1">
            <stop offset="0" stopColor="#2fb36a" />
            <stop offset="1" stopColor="#c9dc3e" />
          </linearGradient>
        </defs>
        <path fill="url(#swirl)" stroke="none" d="M43 1C22 2 2 12 1 25c0 5 4 8 8 8C3 24 14 9 43 1z" />
        <path fill="url(#swirl)" stroke="none" d="M37 7C22 8 10 16 9 25c0 7 9 8 14 2 3-4-1-8-5-5 3 0 3 4-1 4-8-1 1-14 20-19z" />
        <path fill="url(#leaf)" stroke="none" d="M38 13c8 9 2 24-20 27 9-4 13-8 14-13-6 5-12 8-20 8 13-3 24-10 26-22z" />
      </Svg>
      <div>
        <strong>极光下载站</strong>
        <small>www.xz7.com</small>
      </div>
    </Watermark>
  </StatusBar>
);

export default function App() {
  const [zoom, setZoom] = useState(220);
  const [formula, setFormula] = useState(CELL_TEXT);

  return (
    <Page>
      <GlobalStyle />
      <Title />
      <Menu />
      <Toolbar />
      <Body>
        <Work>
          <FormulaRow>
            <NameBox>
              <input aria-label="名称框" defaultValue="A1" />
              <PlainButton aria-label="名称列表" $color="#888"><Icon name="thinDown" /></PlainButton>
            </NameBox>
            <FormulaInput>
              <PlainButton aria-label="查看"><Icon name="zoomOut" /></PlainButton>
              <Fx aria-label="插入函数">fx</Fx>
              <MenuDivider $margin="0 1px 0 2px" />
              <input aria-label="编辑栏" value={formula} onChange={(e) => setFormula(e.target.value)} />
            </FormulaInput>
          </FormulaRow>
          <Sheet />
          <SheetFooter />
        </Work>
        <SelectionPanel />
        <SideBar>
          <i />
          {SIDE.map((name) => (
            <SideButton
              key={name}
              aria-label={name}
              $active={name === "cursor"}
              disabled={name === "sliders" || name === "resize"}
            >
              <Icon name={name} />
            </SideButton>
          ))}
        </SideBar>
      </Body>
      <Status zoom={zoom} onZoom={setZoom} />
    </Page>
  );
}
